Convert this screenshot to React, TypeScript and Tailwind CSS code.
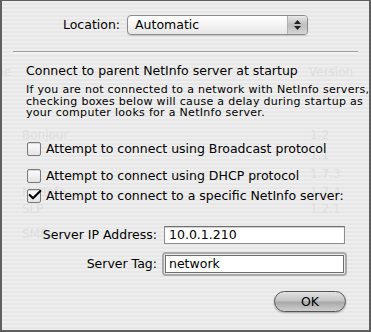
import { Check } from "lucide-react"

const ghostRows = [
  { name: "", version: "1.2.2", top: 86 },
  { name: "Bonjour", version: "1.2", top: 125 },
  { name: "", version: "1.1", top: 145 },
  { name: "", version: "1.7.3", top: 164 },
  { name: "NetInfo", version: "1.7.4", top: 182 },
  { name: "SLP", version: "1.2.1", top: 199 },
  { name: "SMB", version: "", top: 224 },
]

function Checkbox({ checked, label, className }: { checked?: boolean; label: string; className?: string }) {
  return (
    <label className={`flex items-center gap-[5px] ${className ?? ""}`}>
      <span className="relative w-[14px] h-[14px] rounded-[2px] border border-[#7a7a7a] bg-[linear-gradient(#fdfdfd,#e4e4e4)] shadow-[inset_0_1px_1px_rgba(0,0,0,0.15)]">
        {checked && (
          <Check className="absolute -top-[3px] -left-[1px] size-[16px] text-black" strokeWidth={3.2} />
        )}
      </span>
      <span>{label}</span>
    </label>
  )
}

export default function App() {
  return (
    <div className="relative w-[371px] h-[332px] overflow-hidden border-t border-x-2 border-b-2 border-[#5f5f5f] bg-[#ededed] bg-[repeating-linear-gradient(#eeeeee_0px,#eeeeee_2px,#e7e7e7_2px,#e7e7e7_4px)] text-black font-['Lucida_Grande','DejaVu_Sans',sans-serif] text-[12.5px]">
      {/* table behind the sheet */}
      <div className="absolute inset-0 text-[12px] text-[#dedede] pointer-events-none">
        <span className="absolute left-[-26px] top-[62px]">Name</span>
        <span className="absolute left-[307px] top-[62px]">Version</span>
        {ghostRows.map((r, i) => (
          <div key={i}>
            <span className="absolute left-[20px]" style={{ top: r.top }}>{r.name}</span>
            <span className="absolute left-[308px]" style={{ top: r.top }}>{r.version}</span>
          </div>
        ))}
      </div>

      <div className="relative flex flex-col">
        <div className="flex items-center justify-center gap-[7px] pt-[14px]">
          <span>Location:</span>
          <div className="flex w-[181px] h-[20px] rounded-[4px] border border-[#8c8c8c] bg-[linear-gradient(#ffffff,#f4f4f4_50%,#e6e6e6)] shadow-[0_1px_1px_rgba(0,0,0,0.15)] overflow-hidden">
            <span className="flex-1 pl-[7px] leading-[18px]">Automatic</span>
            <span className="w-[20px] flex flex-col items-center justify-center gap-[2px] border-l border-[#b0b0b0] bg-[linear-gradient(#e9e9e9,#bdbdbd_50%,#d6d6d6)]">
              <svg width="7" height="4" viewBox="0 0 7 4"><path d="M0 4 L3.5 0 L7 4 Z" fill="#222" /></svg>
              <svg width="7" height="4" viewBox="0 0 7 4"><path d="M0 0 L3.5 4 L7 0 Z" fill="#222" /></svg>
            </span>
          </div>
        </div>

        <div className="mt-[16px] mx-[11px] h-[2px] border-t border-[#9a9a9a] border-b border-b-[#f8f8f8]" />

        <div className="mt-[10px] pl-[24px] pr-[12px]">
          <div className="leading-[16px]">Connect to parent NetInfo server at startup</div>
          <p className="mt-[5px] text-[11px] tracking-[0.3px] leading-[11.5px] whitespace-nowrap">
            If you are not connected to a network with NetInfo servers,
            <br />
            checking boxes below will cause a delay during startup as
            <br />
            your computer looks for a NetInfo server.
          </p>

          <div className="mt-[22px] flex flex-col pl-[1px] leading-[16px]">
            <Checkbox label="Attempt to connect using Broadcast protocol" />
            <Checkbox className="mt-[11px]" label="Attempt to connect using DHCP protocol" />
            <Checkbox className="mt-[4px]" checked label="Attempt to connect to a specific NetInfo server:" />
          </div>
        </div>

        <div className="mt-[22px] flex flex-col gap-[10px]">
          <div className="flex items-center gap-[7px]">
            <span className="w-[155px] text-right">Server IP Address:</span>
            <div className="w-[181px] h-[18px] pl-[4px] leading-[16px] bg-white border border-[#8e8e8e] border-t-[#6e6e6e] shadow-[inset_0_1px_1px_rgba(0,0,0,0.2)]">
              10.0.1.210
            </div>
          </div>
          <div className="flex items-center gap-[7px]">
            <span className="w-[155px] text-right">Server Tag:</span>
            <div className="w-[181px] h-[20px] rounded-[2px] ring-[2px] ring-[#a9a9a9] p-[1px]">
              <div className="h-full pl-[3px] leading-[16px] bg-white border border-[#6e6e6e]">network</div>
            </div>
          </div>
        </div>

        <div className="mt-[17px] flex justify-end pr-[23px]">
          <button className="w-[72px] h-[21px] rounded-full border border-[#555] bg-[linear-gradient(#e2e2e2,#c4c4c4_45%,#a9a9a9_55%,#cfcfcf)] shadow-[0_1px_2px_rgba(0,0,0,0.3)] text-[12.5px] leading-[19px]">
            OK
          </button>
        </div>
      </div>
    </div>
  )
}
